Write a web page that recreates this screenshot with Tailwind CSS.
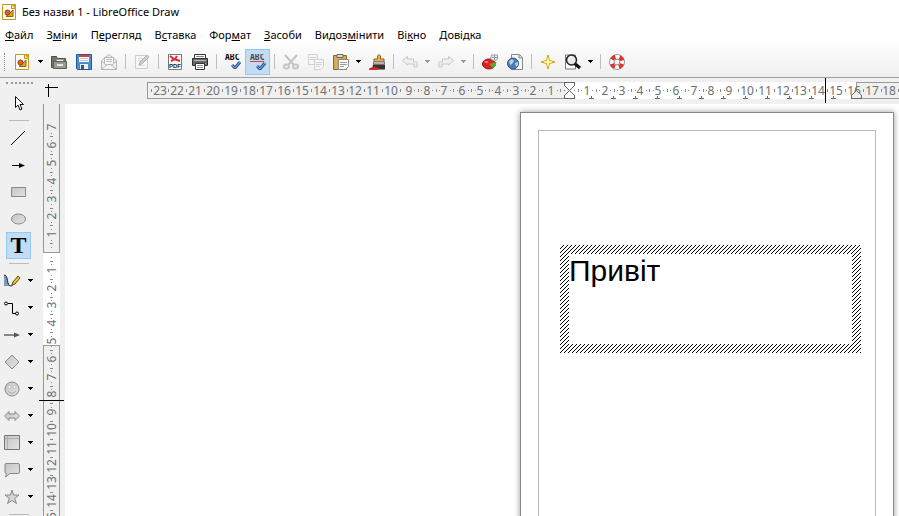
<!DOCTYPE html>
<html lang="uk">
<head>
    <meta charset="utf-8">
    <meta name="viewport" content="width=device-width, initial-scale=1">
    <title>Без назви 1 - LibreOffice Draw</title>
    <script src="https://cdn.jsdelivr.net/npm/@tailwindcss/browser@4"></script>
</head>
<body class="flex h-screen flex-col overflow-hidden bg-[#f0f0f0] font-['Noto_Sans','Open_Sans',sans-serif] text-[11px] text-black">
    <svg class="absolute size-0">
        <defs>
            <linearGradient id="grey" x1="0" y1="0" x2="1" y2="1">
                <stop offset="0" stop-color="#c4c4c4" />
                <stop offset="1" stop-color="#e4e4e4" />
            </linearGradient>
            <symbol id="draw" viewBox="0 0 16 16">
                <path d="M.5 .5h9l4 4v11h-13z" fill="#fffdf3" stroke="#c09a1e" />
                <path d="M9 0h5v5z" fill="#c9a01c" />
                <path d="M9.500 .5v4h4" fill="#f5e7a8" stroke="#c09a1e" />
                <path d="M4 12.500l7-6.500v6.500z" fill="#e3a52c" stroke="#8a6412" />
                <circle cx="5.500" cy="8.500" r="2.500" fill="#df6428" stroke="#8f3c12" />
            </symbol>
            <symbol id="caret" viewBox="0 0 5 3">
                <path d="M0 0h5v1h-1v1h-1v1h-1v-1h-1v-1h-1z" fill="currentColor" />
            </symbol>
            <symbol id="check" viewBox="0 0 10 8">
                <path d="M1 4l3 3 5-6" fill="none" stroke="#27549a" stroke-width="3" />
                <path d="M1 4l3 3 5-6" fill="none" stroke="#8fb7e6" stroke-width="1" />
            </symbol>
        </defs>
    </svg>

    <header class="border-b border-[#a0a0a0] bg-linear-to-b from-white from-50% to-[#efefef]">
        <div class="flex h-6 items-center gap-1 px-0.5">
            <svg class="size-4"><use href="#draw" /></svg>
            <h1>Без назви 1 - LibreOffice Draw</h1>
        </div>
        <nav class="flex h-[22px] items-center gap-[13px] px-[5px]">
            <button><u>Ф</u>айл</button>
            <button>З<u>м</u>іни</button>
            <button>П<u>е</u>регляд</button>
            <button>В<u>с</u>тавка</button>
            <button>Фор<u>м</u>ат</button>
            <button><u>З</u>асоби</button>
            <button>Видоз<u>м</u>інити</button>
            <button>Ві<u>к</u>но</button>
            <button><u>Д</u>овідка</button>
        </nav>
        <div class="flex h-[31px] items-center pl-1">
            <div class="mr-[5px] h-[18px] w-px border-l border-dotted border-[#888]"></div>
            <button class="flex h-[26px] w-[25px] items-center justify-center" aria-label="Створити"><svg class="size-4"><use href="#draw" /></svg></button>
            <button class="flex h-[26px] w-[11px] items-center justify-center" aria-label="Шаблони"><svg class="h-[3px] w-[5px]"><use href="#caret" /></svg></button>
            <button class="flex h-[26px] w-[25px] items-center justify-center" aria-label="Відкрити">
                <svg class="size-4" viewBox="0 0 16 16">
                    <path d="M.5 13.500v-11h5l1 2h8v9z" fill="#6f756b" stroke="#4d5249" />
                    <path d="M5.500 5.500h7v5h-7z" fill="#f5f5f0" stroke="#999" />
                    <path d="M2.500 7.500h13v7h-13z" fill="#969c90" stroke="#5a5f56" />
                    <path d="M6 10h6v2h-6z" fill="#e4e6e0" />
                </svg>
            </button>
            <button class="flex h-[26px] w-[25px] items-center justify-center" aria-label="Зберегти">
                <svg class="size-4" viewBox="0 0 16 16">
                    <path d="M.5 .5h15v15h-14l-1-1z" fill="#4f8ccb" stroke="#24578f" />
                    <path d="M3 1h10v7h-10z" fill="#fff" />
                    <path d="M3 1h10v2h-10z" fill="#d8402f" />
                    <path d="M4 4.500h8M4 6.500h8" stroke="#b8c4d0" />
                    <path d="M4 10h8v5h-8z" fill="#e8eef4" />
                    <path d="M5 11h3v4h-3z" fill="#28598e" />
                </svg>
            </button>
            <button class="flex h-[26px] w-[25px] items-center justify-center" aria-label="Надіслати" disabled>
                <svg class="size-4" viewBox="0 0 16 16" fill="#f2f2f2" stroke="#b4b4b4">
                    <path d="M.5 6.500l7.500-6 7.500 6v9h-15z" />
                    <path d="M3.500 9v-5.500h9v5.500" fill="#fff" />
                    <path d="M5 5.500h6M5 7.500h6" />
                    <path d="M.5 7l5 4.500M15.500 7l-5 4.500M.5 15.500l5.500-5h4l5.500 5" fill="none" />
                </svg>
            </button>
            <div class="flex w-2 justify-center"><div class="h-[15px] w-px bg-[#bdbdbd]"></div></div>
            <button class="flex h-[26px] w-[25px] items-center justify-center" aria-label="Редагувати" disabled>
                <svg class="size-4" viewBox="0 0 16 16">
                    <path d="M1.500 1.500h12v13h-12z" fill="#f7f7f7" stroke="#cdcdcd" />
                    <path d="M4 4.500h6M4 6.500h4M4 11.500h7" stroke="#ddd" />
                    <path d="M5 11l1-3 7-7 2 2-7 7z" fill="#ccc" stroke="#b5b5b5" />
                </svg>
            </button>
            <div class="flex w-2 justify-center"><div class="h-[15px] w-px bg-[#bdbdbd]"></div></div>
            <button class="flex h-[26px] w-[25px] items-center justify-center" aria-label="Експорт у PDF">
                <svg class="size-4" viewBox="0 0 16 16">
                    <path d="M1.500 .5h13v15h-13z" fill="#fafafa" stroke="#777" />
                    <path d="M3 2l4 3 6 2M4 7l4-2 2-3" fill="none" stroke="#e12a38" stroke-width="2" />
                    <text x="2" y="14" font-family="Liberation Sans" font-size="6" font-weight="bold" fill="#222">PDF</text>
                </svg>
            </button>
            <button class="flex h-[26px] w-[25px] items-center justify-center" aria-label="Друкувати">
                <svg class="size-4" viewBox="0 0 16 16">
                    <path d="M2.500 .5h11v5h-11z" fill="#fff" stroke="#333" />
                    <path d="M4 2.500h8" stroke="#888" />
                    <path d="M.5 4.500h15v7h-15z" fill="#666" stroke="#333" />
                    <path d="M2 6h12v1h-12z" fill="#bbb" />
                    <path d="M3.500 9.500h9v6h-9z" fill="#fff" stroke="#333" />
                    <path d="M5 11.500h6M5 13.500h6" stroke="#999" />
                    <path d="M13 9h1v1h-1z" fill="#63d33a" />
                </svg>
            </button>
            <div class="flex w-2 justify-center"><div class="h-[15px] w-px bg-[#bdbdbd]"></div></div>
            <button class="flex h-[26px] w-[25px] items-center justify-center" aria-label="Орфографія">
                <svg class="size-4" viewBox="0 0 16 16">
                    <text x="0" y="6" font-family="DejaVu Sans Mono" font-size="8" font-weight="bold">ABC</text>
                    <use href="#check" x="6" y="7" width="10" height="8" />
                </svg>
            </button>
            <button class="flex h-[26px] w-[25px] items-center justify-center border border-[#90c8f6] bg-[#c2ddf3]" aria-label="Автоматична перевірка" aria-pressed="true">
                <svg class="size-4" viewBox="0 0 16 16">
                    <text x="0" y="6" font-family="DejaVu Sans Mono" font-size="8" font-weight="bold" fill="#444">ABC</text>
                    <path d="M0 8l1-1 1 1 1-1 1 1 1-1 1 1 1-1 1 1 1-1 1 1 1-1 1 1 1-1 1 1" fill="none" stroke="#e33" />
                    <use href="#check" x="6" y="8" width="10" height="8" />
                </svg>
            </button>
            <div class="flex w-2 justify-center"><div class="h-[15px] w-px bg-[#bdbdbd]"></div></div>
            <button class="flex h-[26px] w-[25px] items-center justify-center" aria-label="Вирізати" disabled>
                <svg class="size-4" viewBox="0 0 16 16" fill="none" stroke="#c4c4c4" stroke-width="2">
                    <path d="M2 1l8.500 9.500M14 1l-8.500 9.500" />
                    <ellipse cx="3.500" cy="12.500" rx="2.500" ry="2" />
                    <ellipse cx="12.500" cy="12.500" rx="2.500" ry="2" />
                </svg>
            </button>
            <button class="flex h-[26px] w-[25px] items-center justify-center" aria-label="Копіювати" disabled>
                <svg class="size-4" viewBox="0 0 16 16" fill="#f6f6f6" stroke="#d0d0d0">
                    <path d="M.5 .5h9v10h-9z" />
                    <path d="M2 3.500h6M2 5.500h6" />
                    <path d="M6.500 5.500h9v7l-3 3h-6z" />
                    <path d="M8 8.500h6M8 10.500h6M8 12.500h4" />
                </svg>
            </button>
            <button class="flex h-[26px] w-[25px] items-center justify-center" aria-label="Вставити">
                <svg class="size-4" viewBox="0 0 16 16">
                    <path d="M.5 1.500h13v14h-13z" fill="#dca856" stroke="#966520" />
                    <path d="M4 .5h6v3h-6z" fill="#ddd" stroke="#666" />
                    <path d="M5.500 5.500h10v7l-3 3h-7z" fill="#fff" stroke="#888" />
                    <path d="M7 8.500h7M7 10.500h7M7 12.500h4" stroke="#999" />
                </svg>
            </button>
            <button class="flex h-[26px] w-[11px] items-center justify-center" aria-label="Спеціальна вставка"><svg class="h-[3px] w-[5px]"><use href="#caret" /></svg></button>
            <button class="flex h-[26px] w-[25px] items-center justify-center" aria-label="Клонувати">
                <svg class="size-4" viewBox="0 0 16 16">
                    <path d="M8.500 5v-3l1.500-1.500 1.500 1.500v3h3.500v3h-10v-3z" fill="#e6b453" stroke="#936216" />
                    <path d="M4.500 8h11v2h-11z" fill="#eee" stroke="#777" />
                    <path d="M4 10.500h12v5h-13z" fill="#3d2c2a" />
                    <path d="M0 15c2-3 4 0 6-3l1 2 2-1v3h-9z" fill="#d32636" />
                </svg>
            </button>
            <div class="flex w-2 justify-center"><div class="h-[15px] w-px bg-[#bdbdbd]"></div></div>
            <button class="flex h-[26px] w-[25px] items-center justify-center" aria-label="Вернути" disabled>
                <svg class="size-4" viewBox="0 0 16 16"><path d="M.5 6.500l5-4v2.500h6v3h3.500v5h-3v-3h-6.500v1z" fill="#f0f0f0" stroke="#c8c8c8" /></svg>
            </button>
            <button class="flex h-[26px] w-[11px] items-center justify-center text-[#999]" aria-label="Список дій" disabled><svg class="h-[3px] w-[5px]"><use href="#caret" /></svg></button>
            <button class="flex h-[26px] w-[25px] items-center justify-center" aria-label="Повторити" disabled>
                <svg class="size-4" viewBox="0 0 16 16"><path d="M15.500 6.500l-5-4v2.500h-6v3h-3.500v5h3v-3h6.500v1z" fill="#f0f0f0" stroke="#c8c8c8" /></svg>
            </button>
            <button class="flex h-[26px] w-[11px] items-center justify-center text-[#999]" aria-label="Список повторів" disabled><svg class="h-[3px] w-[5px]"><use href="#caret" /></svg></button>
            <div class="flex w-2 justify-center"><div class="h-[15px] w-px bg-[#bdbdbd]"></div></div>
            <button class="flex h-[26px] w-[25px] items-center justify-center" aria-label="Діаграма">
                <svg class="size-4" viewBox="0 0 16 16">
                    <ellipse cx="7" cy="10" rx="6.500" ry="5" fill="#de2222" stroke="#9e1111" />
                    <path d="M7 10l7-2c1 3-1 5-3 6z" fill="#54ad2b" />
                    <path d="M8.500 5l1-4h6v4l-3 2z" fill="#eee" stroke="#999" />
                    <path d="M10 3.500h5M12.500 1v5" stroke="#999" />
                    <ellipse cx="4.500" cy="8" rx="2" ry="1" fill="#f68080" />
                </svg>
            </button>
            <button class="flex h-[26px] w-[25px] items-center justify-center" aria-label="Гіперпосилання">
                <svg class="size-4" viewBox="0 0 16 16">
                    <path d="M4.500 .5h8l3 3v12h-11z" fill="#f5f5f5" stroke="#888" />
                    <path d="M12 1v3h3" fill="#ddd" stroke="#888" />
                    <circle cx="6" cy="9.500" r="5.500" fill="#4a7cb5" stroke="#2c5687" />
                    <path d="M2 7l3-2 2 2-2 3-2 1zM8 9l3-1v3l-2 2z" fill="#b8d0e6" />
                </svg>
            </button>
            <div class="flex w-2 justify-center"><div class="h-[15px] w-px bg-[#bdbdbd]"></div></div>
            <button class="flex h-[26px] w-[25px] items-center justify-center" aria-label="Навігатор">
                <svg class="size-4" viewBox="0 0 16 16">
                    <path d="M8 1l1.500 5.500 5.500 1.500-5.500 1.500-1.500 5.500-1.500-5.500-5.500-1.500 5.500-1.500z" fill="#fff06b" stroke="#c9a40c" />
                    <path d="M8 4v8M4 8h8" stroke="#fffbd0" />
                </svg>
            </button>
            <button class="flex h-[26px] w-[25px] items-center justify-center" aria-label="Масштаб">
                <svg class="size-4" viewBox="0 0 16 16">
                    <path d="M.5 1v14h10v-14z" fill="#fff" stroke="#777" />
                    <path d="M9 9l6 5" stroke="#111" stroke-width="3" />
                    <circle cx="6.500" cy="6" r="5" fill="#e6eaec" stroke="#222" stroke-width="1.500" />
                    <path d="M4 6c0-2 1-3 3-3" fill="none" stroke="#fff" />
                </svg>
            </button>
            <button class="flex h-[26px] w-[11px] items-center justify-center" aria-label="Вибір масштабу"><svg class="h-[3px] w-[5px]"><use href="#caret" /></svg></button>
            <div class="flex w-2 justify-center"><div class="h-[15px] w-px bg-[#bdbdbd]"></div></div>
            <button class="flex h-[26px] w-[25px] items-center justify-center" aria-label="Довідка">
                <svg class="size-4" viewBox="0 0 16 16" fill="none">
                    <circle cx="8" cy="8" r="7.500" fill="#fff" stroke="#999" />
                    <circle cx="8" cy="8" r="5.500" stroke="#e0322e" stroke-width="4" stroke-dasharray="4.300 4.340" stroke-dashoffset="-2" />
                    <circle cx="8" cy="8" r="3" fill="#f3f3f3" stroke="#888" />
                </svg>
            </button>
        </div>
    </header>

    <main class="flex min-h-0 flex-1">
        <aside class="flex w-[38px] shrink-0 flex-col overflow-hidden pl-[6px]">
            <div class="h-[11px] shrink-0 pt-[4px]"><div class="h-px w-[27px] border-t-2 border-dotted border-[#999]"></div></div>
            <button class="flex h-[27px] w-[25px] shrink-0 items-center justify-center" aria-label="Вибір">
                <svg class="size-4" viewBox="0 0 16 16"><path d="M4.500 1.500v11l2.500-2.500 2 5 2-1-2-4.500h3.500z" fill="#fff" stroke="#111" /></svg>
            </button>
            <div class="flex h-2 w-[25px] shrink-0 items-center justify-center"><div class="h-px w-5 bg-[#bbb]"></div></div>
            <button class="flex h-[27px] w-[25px] shrink-0 items-center justify-center" aria-label="Лінія">
                <svg class="size-4" viewBox="0 0 16 16"><path d="M0 15l14-14" stroke="#000" /></svg>
            </button>
            <button class="flex h-[27px] w-[25px] shrink-0 items-center justify-center" aria-label="Стрілка">
                <svg class="size-4" viewBox="0 0 16 16"><path d="M1 8.500h8" stroke="#000" /><path d="M8 6l6 2.500-6 2.500z" /></svg>
            </button>
            <button class="flex h-[27px] w-[25px] shrink-0 items-center justify-center" aria-label="Прямокутник">
                <svg class="size-4" viewBox="0 0 16 16"><path d="M.5 3.500h14v9h-14z" fill="url(#grey)" stroke="#888" /></svg>
            </button>
            <button class="flex h-[27px] w-[25px] shrink-0 items-center justify-center" aria-label="Еліпс">
                <svg class="size-4" viewBox="0 0 16 16"><ellipse cx="7.500" cy="8" rx="7" ry="5" fill="url(#grey)" stroke="#888" /></svg>
            </button>
            <button class="flex h-[27px] w-[25px] shrink-0 items-center justify-center border border-[#90c8f6] bg-[#c2ddf3] font-['Liberation_Serif',serif] text-2xl leading-[25px] font-bold" aria-pressed="true">T</button>
            <div class="flex h-2 w-[25px] shrink-0 items-center justify-center"><div class="h-px w-5 bg-[#bbb]"></div></div>
            <div class="-ml-[2px] flex flex-col">
                <button class="flex h-[27px] items-center gap-2" aria-label="Крива">
                    <svg class="size-4" viewBox="0 0 16 16">
                        <path d="M0 2c5 0 2 10 7 11h-7z" fill="#7799bb" />
                        <path d="M0 2c5 0 2 11 7 11 2 0 2-2 2-3" fill="none" stroke="#18283b" />
                        <path d="M8 12l1-3 5-6 2 2-5 6z" fill="#f1c232" stroke="#6b4c08" />
                    </svg>
                    <svg class="h-[3px] w-[5px]"><use href="#caret" /></svg>
                </button>
                <button class="flex h-[27px] items-center gap-2" aria-label="З'єднувач">
                    <svg class="size-4" viewBox="0 0 16 16" fill="none" stroke="#000">
                        <circle cx="2" cy="3.500" r="1.500" /><circle cx="13" cy="13.500" r="1.500" />
                        <path d="M4 3.500h4.500v10h3" />
                    </svg>
                    <svg class="h-[3px] w-[5px]"><use href="#caret" /></svg>
                </button>
                <button class="flex h-[27px] items-center gap-2" aria-label="Лінії та стрілки">
                    <svg class="size-4" viewBox="0 0 16 16"><path d="M0 8h11" stroke="#888" stroke-width="2" /><path d="M10 5.500l6 2.500-6 2.500z" fill="#555" /></svg>
                    <svg class="h-[3px] w-[5px]"><use href="#caret" /></svg>
                </button>
                <button class="flex h-[27px] items-center gap-2" aria-label="Основні фігури">
                    <svg class="size-4" viewBox="0 0 16 16"><path d="M8 1l7 7-7 7-7-7z" fill="url(#grey)" stroke="#888" /></svg>
                    <svg class="h-[3px] w-[5px]"><use href="#caret" /></svg>
                </button>
                <button class="flex h-[27px] items-center gap-2" aria-label="Символи">
                    <svg class="size-4" viewBox="0 0 16 16" stroke="#888">
                        <circle cx="8" cy="8" r="7" fill="url(#grey)" />
                        <circle cx="5.500" cy="6" r="1.500" fill="#fff" stroke="#bbb" /><circle cx="10.500" cy="6" r="1.500" fill="#fff" stroke="#bbb" />
                        <path d="M4 10c2 3 6 3 8 0" fill="none" stroke="#aaa" />
                    </svg>
                    <svg class="h-[3px] w-[5px]"><use href="#caret" /></svg>
                </button>
                <button class="flex h-[27px] items-center gap-2" aria-label="Блокові стрілки">
                    <svg class="size-4" viewBox="0 0 16 16"><path d="M.5 8l4.500-4.500v2.500h6v-2.500l4.500 4.500-4.500 4.500v-2.500h-6v2.500z" fill="url(#grey)" stroke="#888" /></svg>
                    <svg class="h-[3px] w-[5px]"><use href="#caret" /></svg>
                </button>
                <button class="flex h-[27px] items-center gap-2" aria-label="Блок-схема">
                    <svg class="size-4" viewBox="0 0 16 16"><path d="M.5 .5h15v14h-15z" fill="url(#grey)" stroke="#777" /><path d="M1 3.500h14M3.500 1v13" stroke="#b0b0b0" /></svg>
                    <svg class="h-[3px] w-[5px]"><use href="#caret" /></svg>
                </button>
                <button class="flex h-[27px] items-center gap-2" aria-label="Виноски">
                    <svg class="size-4" viewBox="0 0 16 16"><path d="M2 1.500h12q1.500 0 1.500 1.500v7q0 1.500-1.500 1.500h-8l-4.500 3.500 1-3.500q-1.500 0-1.500-1.500v-7q0-1.500 1-1.500z" fill="url(#grey)" stroke="#888" /></svg>
                    <svg class="h-[3px] w-[5px]"><use href="#caret" /></svg>
                </button>
                <button class="flex h-[27px] items-center gap-2" aria-label="Зірки">
                    <svg class="size-4" viewBox="0 0 16 16"><path d="M8 1l1.700 5h5.300l-4.300 3.500 1.800 5-4.500-3-4.500 3 1.800-5-4.300-3.500h5.300z" fill="url(#grey)" stroke="#888" /></svg>
                    <svg class="h-[3px] w-[5px]"><use href="#caret" /></svg>
                </button>
            </div>
            <div class="flex h-2 w-[25px] shrink-0 items-center justify-center"><div class="h-px w-5 bg-[#bbb]"></div></div>
        </aside>

        <div class="flex w-[27px] shrink-0 flex-col">
            <svg class="h-[26px] w-full shrink-0" stroke="#000"><path d="M7 9.500h13M10.500 6v13" /></svg>
            <svg id="ruler-v" class="min-h-0 w-full flex-1" shape-rendering="crispEdges">
                <path d="M5 0h17v5000h-17z" fill="#fff" />
                <path d="M5.500 -1h16v149h-16zM5.500 241.500h16v5000h-16z" fill="#f0f0f0" stroke="#999" />
            </svg>
        </div>

        <div class="flex min-w-0 flex-1 flex-col">
            <svg id="ruler-h" class="h-[26px] w-full shrink-0" shape-rendering="crispEdges">
                <path d="M504 4h287v17h-287z" fill="#fff" />
                <path d="M82.500 4.500h422v16h-422zM791.500 4.500h5000v16h-5000z" fill="#f0f0f0" stroke="#999" />
            </svg>
            <div class="relative min-h-0 flex-1 overflow-hidden bg-white">
                <div class="absolute top-2 left-[455px] h-[529px] w-[374px] border border-[#888] bg-white p-[17px] shadow-[0_0_6px_#999]">
                    <div class="h-full border border-[#bbb] px-[21px] pt-[114px]">
                        <div class="relative -mr-[8px] h-[108px] w-[301px] p-[9px]">
                            <svg class="absolute inset-0 size-full" shape-rendering="crispEdges">
                                <pattern id="hatch" width="4" height="4" patternUnits="userSpaceOnUse">
                                    <path d="M3 0h1v1h-1zM2 1h1v1h-1zM1 2h1v1h-1zM0 3h1v1h-1z" />
                                </pattern>
                                <rect width="100%" height="100%" fill="url(#hatch)" />
                            </svg>
                            <textarea class="relative block size-full resize-none bg-white font-['Liberation_Sans',sans-serif] text-[30px] leading-[34px] outline-none" aria-label="Текст" spellcheck="false">Привіт</textarea>
                        </div>
                    </div>
                </div>
            </div>
        </div>
    </main>

    <script>
        const NS = 'http://www.w3.org/2000/svg'
        const UNIT = 17.8

        function add(parent, name, attrs, text) {
            const el = document.createElementNS(NS, name)
            for (const key in attrs) el.setAttribute(key, attrs[key])
            if (text !== undefined) el.textContent = text
            parent.appendChild(el)
        }

        // the vertical ruler is the same drawing with its labels turned by -90 degrees
        function scale(svg, zero, from, length, vertical) {
            const mark = (pos, size) => {
                const p = Math.round(pos)
                const a = size / 2
                add(svg, 'path', {
                    d: vertical ? `M${13.5 - a} ${p + .5}h${size}` : `M${p + .5} ${12.5 - a}v${size}`,
                    stroke: '#888',
                })
            }
            for (let n = from; zero + n * UNIT < length + 4; n++) {
                const pos = zero + n * UNIT
                if (n !== 0) {
                    add(svg, 'text', {
                        x: 0, y: 0, fill: '#707070', 'font-size': 12, 'text-anchor': 'middle',
                        transform: vertical ? `translate(18 ${Math.round(pos)}) rotate(-90)` : `translate(${Math.round(pos)} 17)`,
                    }, Math.abs(n))
                }
                mark(pos + UNIT / 2, 3)
                if (Math.abs(n) < 10 && Math.abs(n + 1) < 10) {
                    mark(pos + UNIT / 4 + 1, 1)
                    mark(pos + UNIT * 3 / 4 - 1, 1)
                }
            }
        }

        // 65 and 104 are the bars to the left of and above the canvas
        const h = document.getElementById('ruler-h')
        scale(h, 504, -23, window.innerWidth - 65, false)
        add(h, 'path', { d: 'M86.500 11v3', stroke: '#888' })
        for (let i = 0; i < 12; i++) {
            add(h, 'path', { d: `M${524 + i * 22} 20.500h5M${526.5 + i * 22} 18v3`, stroke: '#666' })
        }
        add(h, 'path', { d: 'M499.500 4.500h10v3l-10 10v3h10v-3l-10-10z', fill: '#fff', stroke: '#666' })
        add(h, 'path', { d: 'M786.500 20.500v-3l5-5 5 5v3z', fill: '#f0f0f0', stroke: '#666' })
        add(h, 'path', { d: 'M760.500 0v25', stroke: '#000' })

        const v = document.getElementById('ruler-v')
        scale(v, 148, -7, window.innerHeight - 104, true)
        add(v, 'path', { d: 'M1 296.500h25', stroke: '#000' })
    </script>
</body>
</html>
